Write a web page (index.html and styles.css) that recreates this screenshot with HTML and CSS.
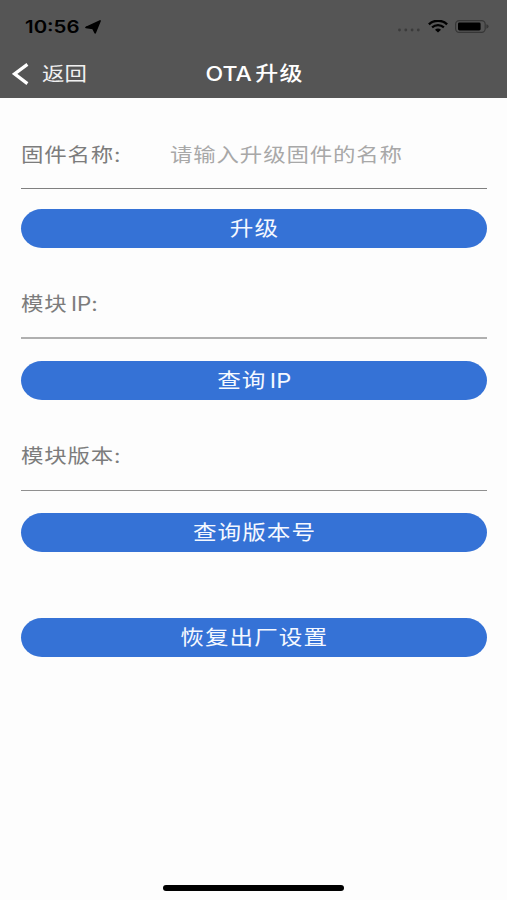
FILE: index.html
```html
<!DOCTYPE html>
<html lang="zh-CN">
<head>
    <meta charset="UTF-8">
    <meta name="viewport" content="width=device-width, initial-scale=1.0">
    <title>OTA升级</title>
    <link rel="stylesheet" href="styles.css">
</head>
<body>

<div class="screen">
    <header class="top-bar">
        <div class="status-bar">
            <div class="status-left">
                <span class="clock">10:56</span>
                <svg class="location-icon" width="16" height="14" viewBox="0 0 16 14"><path d="M15 0.9 L10.2 12.8 L7.9 8.4 L1 7.4 Z" fill="#000" stroke="#000" stroke-width="1.7" stroke-linejoin="round"/></svg>
            </div>
            <div class="status-right">
                <svg class="signal-icon" width="24" height="4" viewBox="0 0 24 4" fill="#3b3b3b"><circle cx="2.5" cy="2" r="1.4"/><circle cx="8.8" cy="2" r="1.4"/><circle cx="15.1" cy="2" r="1.4"/><circle cx="21.3" cy="2" r="1.4"/></svg>
                <svg class="wifi-icon" width="20" height="13" viewBox="0 0 20 13" fill="none" stroke="#000"><path d="M0.9 4.4 C5.8 -0.4 14.2 -0.4 19.1 4.4" stroke-width="2.4"/><path d="M4.1 7.4 C7.4 4.4 12.6 4.4 15.9 7.4" stroke-width="2.2"/><path d="M7 9.7 C8.8 8.2 11.2 8.2 13 9.7 L10 12.6 Z" fill="#000" stroke="none"/></svg>
                <svg class="battery-icon" width="34" height="13" viewBox="0 0 34 13"><rect x="0.6" y="0.6" width="29.6" height="11.8" rx="3.6" fill="none" stroke="#363636" stroke-width="1.2"/><rect x="3" y="2.6" width="22.6" height="7.8" rx="1.4" fill="#000"/><path d="M31.4 4.3 Q33.6 4.9 33.6 6.5 Q33.6 8.1 31.4 8.7 Z" fill="#363636"/></svg>
            </div>
        </div>
        <nav class="nav-bar">
            <a class="back">
                <svg width="17" height="22" viewBox="0 0 17 22"><path d="M15.4 1.4 L2.6 10.9 L15.4 20.6" fill="none" stroke="#fff" stroke-width="3.2"/></svg>
                <span class="back-text">返回</span>
            </a>
            <h1><span class="wide"><span class="latin">OTA</span>升级</span></h1>
        </nav>
    </header>

    <main>
        <section class="group">
            <div class="field field-name">
                <label for="name">固件名称:</label>
                <input id="name" type="text" placeholder="请输入升级固件的名称">
            </div>
            <button type="button"><span class="wide">升级</span></button>
        </section>

        <section class="group">
            <div class="field field-ip">
                <label>模块<span class="latin-after">IP:</span></label>
            </div>
            <button type="button"><span class="wide">查询<span class="latin-after">IP</span></span></button>
        </section>

        <section class="group">
            <div class="field field-version">
                <label>模块版本:</label>
            </div>
            <button type="button"><span class="wide">查询版本号</span></button>
        </section>

        <button class="reset" type="button"><span class="wide">恢复出厂设置</span></button>
    </main>

    <div class="home-indicator"></div>
</div>

</body>
</html>
```
FILE: styles.css
```css
:root {
    --bar-color: #555555;
    --primary-color: #3572d6;
    --label-color: #7c7c7c;
    --placeholder-color: #a8a8a8;
    --font-family: Inter, "Noto Sans CJK SC", sans-serif;
}

* {
    box-sizing: border-box;
}

body {
    margin: 0;
    font-family: var(--font-family);
    background-color: #fdfdfd;
    text-autospace: no-autospace;
}

.screen {
    height: 900px;
    display: flex;
    flex-direction: column;
    overflow: hidden;
}

.top-bar {
    height: 98px;
    flex: none;
    background-color: var(--bar-color);
    display: flex;
    flex-direction: column;
}

.status-bar {
    height: 50px;
    padding: 3px 18px 0 25px;
    display: flex;
    justify-content: space-between;
    align-items: center;
}

.status-left,
.status-right {
    display: flex;
    align-items: center;
}

.clock {
    width: 60px;
    font-size: 17px;
    font-weight: 600;
    line-height: 20px;
    color: #000;
    transform: scaleX(1.2);
    transform-origin: left center;
}

.signal-icon {
    margin: 7px 7px 0 0;
}

.wifi-icon {
    margin-right: 7px;
}

.nav-bar {
    height: 48px;
    display: grid;
    grid-template-columns: 1fr auto 1fr;
    align-items: center;
    padding-left: 12px;
}

.back {
    display: flex;
    align-items: center;
    color: #fff;
}

.back-text {
    margin-left: 13px;
    font-size: 19.5px;
    line-height: 28px;
    color: #f0f0f0;
    transform: scaleX(1.15);
    transform-origin: left center;
}

h1 {
    margin: 0 10px 0 0;
    font-size: 20px;
    font-weight: 500;
    line-height: 28px;
    color: #fff;
    letter-spacing: 1px;
}

/* glyphs are drawn a little wider than tall */
.wide {
    display: inline-block;
    transform: scaleX(1.15);
}

.latin {
    letter-spacing: 0;
    margin-right: 3px;
}

.latin-after {
    letter-spacing: 0;
    margin-left: 3px;
}

main {
    flex: 1;
    padding: 0 20px 0 21px;
}

.field {
    height: 91px;
    padding-top: 22px;
    margin-bottom: 22px;
    display: flex;
    align-items: center;
    border-bottom: 1px solid #808080;
}

.field-name {
    padding-top: 23px;
    margin-bottom: 20px;
}

.field-ip {
    border-bottom: 2px solid #b0b0b0;
}

.field-version {
    border-bottom-color: #909090;
}

label {
    width: 149px;
    font-size: 19.5px;
    line-height: 28px;
    letter-spacing: 0.7px;
    color: var(--label-color);
    font-feature-settings: "calt" 0;
    transform: scaleX(1.15);
    transform-origin: left center;
}

input {
    width: 240px;
    padding: 0;
    border: none;
    outline: none;
    background: none;
    font-family: inherit;
    font-size: 19.5px;
    line-height: 28px;
    letter-spacing: 0.75px;
    transform: scaleX(1.15);
    transform-origin: left center;
}

input::placeholder {
    color: var(--placeholder-color);
}

button {
    display: block;
    width: 100%;
    height: 39px;
    padding: 0;
    border: none;
    border-radius: 21px / 19.5px;
    background-color: var(--primary-color);
    color: #f4f8ff;
    font-family: inherit;
    font-size: 20.5px;
    line-height: 37px;
    letter-spacing: 0.9px;
}

.reset {
    margin-top: 66px;
}

.home-indicator {
    width: 181px;
    height: 6px;
    flex: none;
    margin: 0 auto 9px;
    border-radius: 3px;
    background-color: #000;
}
```
